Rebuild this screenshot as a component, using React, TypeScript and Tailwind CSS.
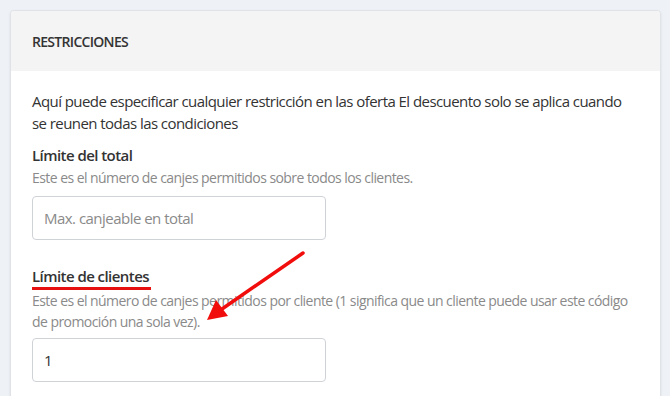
export default function App() {
  return (
    <div
      className="relative h-[396px] w-[670px] overflow-hidden bg-[#eef1f5] pl-[10px] pt-[10px] tracking-[-0.035em]"
      style={{ fontFamily: '"Open Sans", "Noto Sans", sans-serif' }}
    >
      <div className="w-[651px] h-[420px] rounded-[4px] border border-[#dfe2e6] bg-white shadow-[0_1px_3px_rgba(0,0,0,0.08)]">
        <div className="flex h-[60px] items-center bg-[#f4f4f4] px-[21px] rounded-t-[4px]">
          <h2 className="text-[14px] font-semibold uppercase tracking-[-0.05em] text-[#333]">Restricciones</h2>
        </div>
        <div className="px-[21px] pt-[19px]">
          <p className="text-[15px] leading-[22px] text-[#333]">
            Aquí puede especificar cualquier restricción en las oferta El descuento solo se aplica cuando se reunen todas las condiciones
          </p>

          <div className="mt-[10px]">
            <label className="block text-[15px] font-semibold leading-[22px] text-[#333]">Límite del total</label>
            <p className="mt-[1px] text-[14px] leading-[21px] text-[#8a8a8a]">
              Este es el número de canjes permitidos sobre todos los clientes.
            </p>
            <input
              className="mt-[8px] block h-[44px] w-[294px] rounded-[4px] border border-[#cfd3d8] px-[11px] text-[15px] tracking-[-0.035em] text-[#333] outline-none placeholder:text-[#8a8a8a]"
              placeholder="Max. canjeable en total"
            />
          </div>

          <div className="mt-[24px]">
            <label className="inline-block border-b-[3px] border-[#e5100f] pr-[2px] text-[15px] font-semibold leading-[22px] text-[#333]">
              Límite de clientes
            </label>
            <p className="text-[14px] leading-[21px] text-[#8a8a8a]">
              Este es el número de canjes permitidos por cliente (1 significa que un cliente puede usar este código de promoción una sola vez).
            </p>
            <input
              className="mt-[6px] block h-[44px] w-[294px] rounded-[4px] border border-[#cfd3d8] px-[11px] text-[15px] text-[#333] outline-none"
              defaultValue="1"
            />
          </div>
        </div>
      </div>

      <svg className="absolute left-0 top-0" width="670" height="396" viewBox="0 0 670 396">
        <line x1="303" y1="253" x2="222" y2="309" stroke="#f20d0d" strokeWidth="3.5" strokeLinecap="round" />
        <polygon points="207,320 216,300 228,316" fill="#f20d0d" />
      </svg>
    </div>
  );
}
